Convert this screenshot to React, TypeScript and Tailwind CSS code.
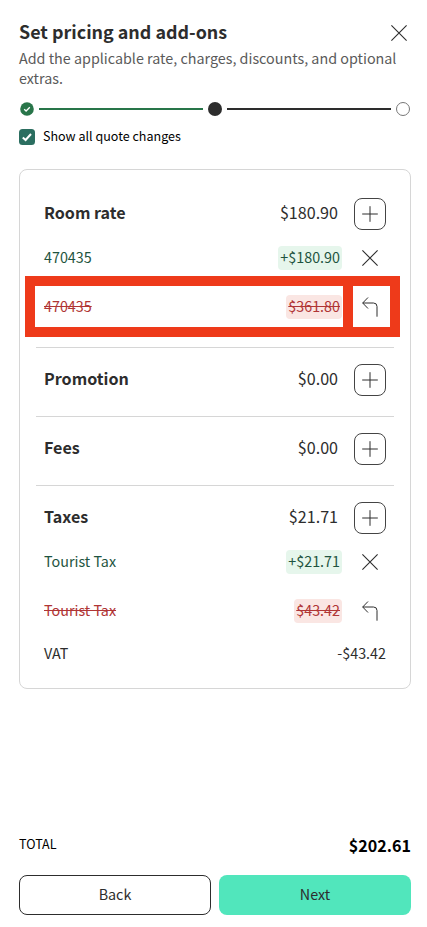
import type { ReactNode } from "react";

type Item = {
  label: string;
  amount: string;
  kind: "added" | "removed" | "plain";
  highlighted?: boolean;
};

type Section = {
  title: string;
  amount: string;
  items: Item[];
};

const sections: Section[] = [
  {
    title: "Room rate",
    amount: "$180.90",
    items: [
      { label: "470435", amount: "+$180.90", kind: "added" },
      { label: "470435", amount: "$361.80", kind: "removed", highlighted: true },
    ],
  },
  { title: "Promotion", amount: "$0.00", items: [] },
  { title: "Fees", amount: "$0.00", items: [] },
  {
    title: "Taxes",
    amount: "$21.71",
    items: [
      { label: "Tourist Tax", amount: "+$21.71", kind: "added" },
      { label: "Tourist Tax", amount: "$43.42", kind: "removed" },
      { label: "VAT", amount: "-$43.42", kind: "plain" },
    ],
  },
];

function CloseIcon() {
  return (
    <svg width="16" height="16" viewBox="0 0 16 16" fill="none" stroke="#2d2d2d" strokeWidth="1.1">
      <path d="M0.4 0.4 15.6 15.6M15.6 0.4 0.4 15.6" />
    </svg>
  );
}

function PlusIcon() {
  return (
    <svg width="16" height="16" viewBox="0 0 16 16" fill="none" stroke="#2d2d2d" strokeWidth="1">
      <path d="M8 0.2V15.8M0.2 8H15.8" />
    </svg>
  );
}

function UndoIcon() {
  return (
    <svg width="16" height="20" viewBox="0 0 16 20" fill="none" stroke="#2d2d2d" strokeWidth="1">
      <path d="M6 0.5 0.7 6 6 11.5M0.7 6H11.5Q15 6 15 9.5V19.7" />
    </svg>
  );
}

function Stepper() {
  return (
    <div className="flex items-center gap-[5px] px-px mt-[14px]">
      <svg width="14" height="14" viewBox="0 0 14 14" fill="none">
        <circle cx="7" cy="7" r="6.8" fill="#287549" />
        <path d="M4.2 7.2 6.1 9 9.8 5.3" stroke="#fff" strokeWidth="1.3" />
      </svg>
      <div className="h-0.5 flex-1 bg-[#287549]" />
      <div className="size-3.5 rounded-full bg-[#2d2d2d]" />
      <div className="h-0.5 flex-1 bg-[#2d2d2d]" />
      <div className="size-3.5 rounded-full border border-[#777]" />
    </div>
  );
}

// Thick red frame around a row, with a bar separating the amount from its action
function Highlight() {
  return (
    <div className="absolute -left-[19px] -right-[14px] -top-[7px] -bottom-[6px] border-[10px] border-[#ee3a1a] flex justify-end pointer-events-none">
      <div className="w-[10px] mr-[37px] bg-[#ee3a1a]" />
    </div>
  );
}

function Action({ children }: { children: ReactNode }) {
  return <button className="w-8 h-8 ml-3 flex items-center justify-center">{children}</button>;
}

function ItemRow({ item }: { item: Item }) {
  if (item.kind === "plain") {
    return (
      <div className="h-9 pb-0.5 flex items-center justify-between text-[14.33px] text-[#2d2d2d]">
        <span>{item.label}</span>
        <span>{item.amount}</span>
      </div>
    );
  }

  const added = item.kind === "added";
  return (
    <div className="relative h-12 flex items-center text-[14.33px] leading-[22px]">
      <span className={added ? "flex-1 pb-0.5 text-[#1e5440]" : "flex-1 pb-0.5 text-[#b03535] line-through"}>
        {item.label}
      </span>
      <span
        className={
          added
            ? "h-6 px-0.5 rounded bg-[#e6f6ec] text-[#1e5440]"
            : "h-6 px-0.5 rounded bg-[#fae6e3] text-[#b03535] line-through"
        }
      >
        {item.amount}
      </span>
      <Action>{added ? <CloseIcon /> : <UndoIcon />}</Action>
      {item.highlighted && <Highlight />}
    </div>
  );
}

export default function App() {
  return (
    <main className="w-[427px] h-[927px] bg-white pl-[19px] pr-4 pt-5 pb-3 flex flex-col font-['Noto_Sans_CJK_SC',sans-serif] leading-6 text-[#2d2d2d]">
      <header>
        <div className="flex items-center justify-between pr-1">
          <h1 className="pb-0.5 text-[17.9px] leading-[22px] font-bold">Set pricing and add-ons</h1>
          <button className="pt-0.5">
            <CloseIcon />
          </button>
        </div>
        <p className="mt-1 text-[14.33px] leading-5 text-[#5a5a5a]">
          Add the applicable rate, charges, discounts, and optional extras.
        </p>
        <Stepper />
        <label className="mt-[11px] flex items-center gap-2 text-[12.54px] leading-[18px] text-black">
          <svg width="16" height="16" viewBox="0 0 16 16" fill="none">
            <rect width="16" height="16" rx="3.5" fill="#2b6e60" />
            <path d="M3.8 8.4 6.6 11 12 5" stroke="#fff" strokeWidth="2" />
          </svg>
          <span className="pb-0.5">Show all quote changes</span>
        </label>
      </header>

      <div className="mt-[22px] rounded-lg border border-[#d6d6d6] px-4 pt-3">
        {sections.map((section, i) => (
          <section
            key={section.title}
            className={
              i < sections.length - 1
                ? "px-2 py-4 border-b border-[#d6d6d6]"
                : "px-2 py-4"
            }
          >
            <div className="flex items-center mb-1 text-[16.1px]">
              <h2 className="flex-1 pb-[5px] font-bold">{section.title}</h2>
              <span className="pb-[5px]">{section.amount}</span>
              <button className="ml-4 size-8 rounded-lg border border-[#444] flex items-center justify-center">
                <PlusIcon />
              </button>
            </div>
            <div className="flex flex-col gap-px">
              {section.items.map((item) => (
                <ItemRow key={item.label + item.amount} item={item} />
              ))}
            </div>
          </section>
        ))}
      </div>

      <footer className="mt-auto">
        <div className="flex items-start justify-between text-black mb-[18px]">
          <span className="text-[12.54px] leading-[22px]">TOTAL</span>
          <span className="text-[16.1px] font-bold">$202.61</span>
        </div>
        <div className="grid grid-cols-2 gap-2 text-[14.33px]">
          <button className="h-10 pb-0.5 rounded-lg border border-[#2d2d2d]">Back</button>
          <button className="h-10 pb-0.5 rounded-lg bg-[#51e6bc]">Next</button>
        </div>
      </footer>
    </main>
  );
}
